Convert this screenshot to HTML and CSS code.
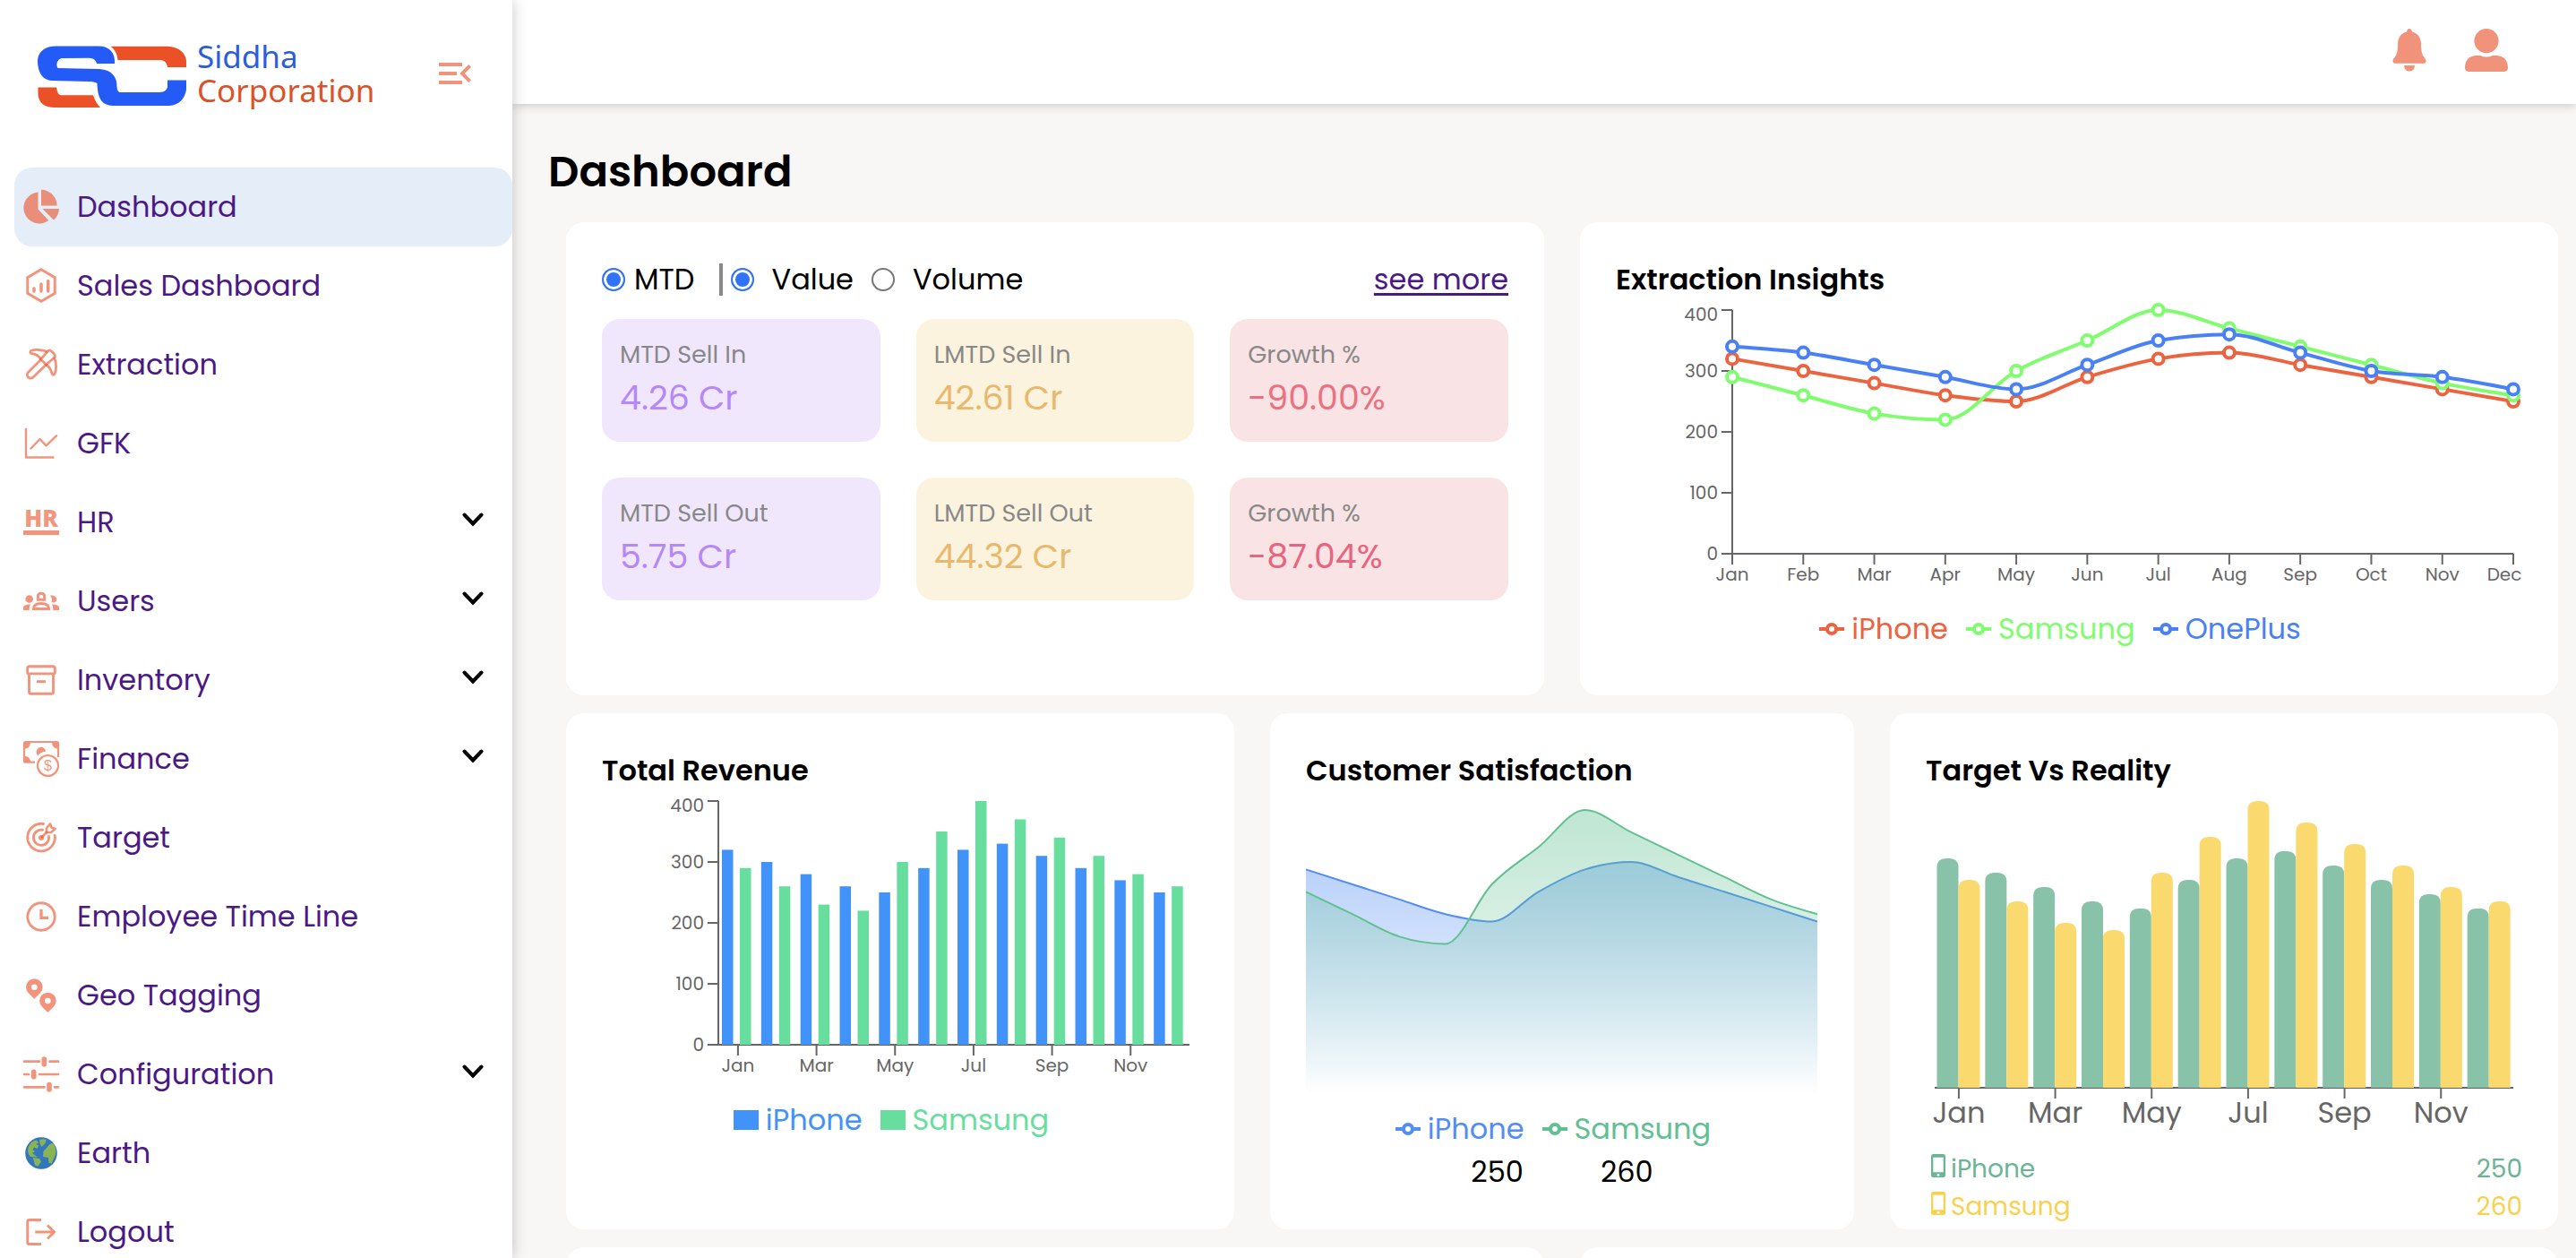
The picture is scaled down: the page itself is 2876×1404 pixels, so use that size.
FILE: index.html
```html
<!DOCTYPE html>
<html lang="en">
<head>
<meta charset="utf-8">
<meta name="viewport" content="width=device-width, initial-scale=1">
<title>Siddha Corporation - Dashboard</title>
<link rel="stylesheet" href="styles.css">
</head>
<body>
<div class="app">
  <aside class="sidebar">
    <div class="brand">
      <svg class="brand-mark" viewBox="0 0 166 70" aria-hidden="true">
        <path fill="#245af6" d="M20 0.5H68C80 0.5 87 8 86 20H66C64.500 15 62 14 58 13.700L27 14C22 15 20 21 22.500 25L69 26C82 27 89 34 88.500 46C89 50 90 52 93 52H136C142 52 145 49 145 45V38.500H166V49C164 60 158 66 147 67H84C72 66 67 60 66.500 42C64 40.500 61 40 57 40L16 39C4 38 0 28 0 16C1 6 9 0.500 20 0.500Z"/>
        <path fill="#eb5026" d="M81.500 0.700H145C158 1 165 8 166 17V24H145C144 18 141 16 136 16H89.500C89 9 86 4 81.500 0.700ZM0.500 46.500H21C22 52 23 55 26 55.300H62C64 61 66 65 70 69H19C8 69 1 64 0.500 54Z"/>
      </svg>
      <span class="brand-name"><span>Siddha</span><span>Corporation</span></span>
      <button class="icon-button" type="button" aria-label="Collapse menu">
        <svg viewBox="0 0 24 24"><path fill="currentColor" d="M3 18h13v-2H3v2zm0-5h10v-2H3v2zm0-7v2h13V6H3zm18 9.590L17.420 12 21 8.410 19.590 7l-5 5 5 5L21 15.590z"/></svg>
      </button>
    </div>
    <nav class="nav">
      <a class="nav-link active" href="#dashboard">
        <svg class="nav-icon" viewBox="0 0 40 40"><path class="solid" d="M16.500 3.500V22.500L28.300 35A17.500 17.500 0 1 1 16.500 3.500ZM20 .8A17.800 17.800 0 0 1 37.600 18.500H20ZM21.500 22H40A18 18 0 0 1 34 34.500Z"/></svg>
        <span>Dashboard</span></a>
      <a class="nav-link" href="#sales">
        <svg class="nav-icon" viewBox="0 0 40 40"><path d="M20 1.800L35.200 10.700V28.300L20 37.200L4.800 28.300V10.700Z" stroke-width="3"/><path d="M12 23V26M20 18V26M27.700 14.500V26" stroke-width="3.500" stroke-linecap="round"/></svg>
        <span>Sales Dashboard</span></a>
      <a class="nav-link" href="#extraction">
        <svg class="nav-icon" viewBox="0 0 40 40"><path d="M20 14L5.500 28.500A3.500 3.500 0 0 0 11 34L26 19.500" stroke-width="2.800"/><path d="M27 5.500Q29 2.500 31.500 5L34.500 8Q36.500 10.500 34 12.500L25.500 20L19.500 14Z" stroke-width="2.800"/><path d="M27 5.500C21 3 12 3 8.500 4.500Q7 6.500 9 7.500C14 8 17 10 20 14M34.500 12C37.500 18 37 26 35 30.500Q33.500 32.500 32 30C31 26 29 22 25.500 20" stroke-width="2.800"/></svg>
        <span>Extraction</span></a>
      <a class="nav-link" href="#gfk">
        <svg class="nav-icon" viewBox="0 0 40 40"><path d="M3 4V35.500H33.500M8.500 25.500L18.500 15L25.500 22.300L37 11.300" stroke-width="2.400" stroke-linecap="round" stroke-linejoin="round"/></svg>
        <span>GFK</span></a>
      <a class="nav-link" href="#hr">
        <svg class="nav-icon" viewBox="0 0 40 40"><text class="solid hr-text" x="20" y="24.500" text-anchor="middle">HR</text><path class="solid" d="M0 29H40V34H0Z"/></svg>
        <span>HR</span><svg class="chevron" viewBox="0 0 24 16"><path d="M2.500 2.500L12 12.500L21.500 2.500"/></svg></a>
      <a class="nav-link" href="#users">
        <svg class="nav-icon" viewBox="0 0 40 40"><path class="solid" d="M2.400 17.500A4.300 4.300 0 1 1 11 17.500A4.300 4.300 0 0 1 2.400 17.500ZM29.500 13.600C33 12.800 37.300 14.500 37.300 17.500C37.300 21 34 22.500 31.500 20.800C32.700 18.500 32 15.500 29.500 13.600ZM0 30V27Q0 23.500 8 23.500Q6.500 26 6.600 30ZM40 30V27Q40 23.500 32 23.500Q33.500 26 33.400 30Z"/><path d="M16.400 14.500Q16.400 11.300 20 11.300Q23.600 11.300 23.600 14.500V18.300H16.400ZM11.400 28.500Q11.400 22.500 20 22.500Q28.600 22.500 28.600 28.500Z" stroke-width="3"/></svg>
        <span>Users</span><svg class="chevron" viewBox="0 0 24 16"><path d="M2.500 2.500L12 12.500L21.500 2.500"/></svg></a>
      <a class="nav-link" href="#inventory">
        <svg class="nav-icon" viewBox="0 0 40 40"><path d="M7 4.700H33Q35.300 4.700 35.300 7V11.500Q35.300 12.900 33.600 12.900H6.400Q4.700 12.900 4.700 11.500V7Q4.700 4.700 7 4.700ZM6.500 13V33Q6.500 35.300 8.500 35.300H31.500Q33.500 35.300 33.500 33V13" stroke-width="2.900"/><path d="M15 21.700H25" stroke-width="3"/></svg>
        <span>Inventory</span><svg class="chevron" viewBox="0 0 24 16"><path d="M2.500 2.500L12 12.500L21.500 2.500"/></svg></a>
      <a class="nav-link" href="#finance">
        <svg class="nav-icon" viewBox="0 0 40 40"><path d="M13 23.700H2.500Q1 23.700 1 22.200V2.500Q1 1 2.500 1H37.500Q39 1 39 2.500V18" stroke-width="2.200"/><path class="solid" d="M2 2H8Q7.500 8 2 8.500ZM38 2H32Q32.500 8 38 8.500ZM2 23V17Q7.500 17.500 8 23ZM15 14A5.200 5.200 0 1 1 25 11.500Q19 12.500 16 16.500Z"/><circle cx="27.500" cy="27.500" r="11.500" stroke-width="2.200"/><text class="solid dollar" x="27.500" y="33" text-anchor="middle">$</text></svg>
        <span>Finance</span><svg class="chevron" viewBox="0 0 24 16"><path d="M2.500 2.500L12 12.500L21.500 2.500"/></svg></a>
      <a class="nav-link" href="#target">
        <svg class="nav-icon" viewBox="0 0 40 40"><path d="M22.500 4.500A15.300 15.300 0 1 0 35.200 17.500M21.500 11.300A8.600 8.600 0 1 0 28.500 18.500" stroke-width="2.900" stroke-linecap="round"/><path d="M20 20L27 13" stroke-width="2.900"/><circle class="solid" cx="20" cy="20" r="3"/><path d="M26 14V9L30 4.500L31.500 8.500L35.500 10L31 14Z" stroke-width="2.600" stroke-linejoin="round"/></svg>
        <span>Target</span></a>
      <a class="nav-link" href="#timeline">
        <svg class="nav-icon" viewBox="0 0 40 40"><circle cx="20" cy="20" r="15.200" stroke-width="2.900"/><path d="M20 11.700V21.300H28" stroke-width="3.300"/></svg>
        <span>Employee Time Line</span></a>
      <a class="nav-link" href="#geo">
        <svg class="nav-icon" viewBox="0 0 40 40"><path class="solid" fill-rule="evenodd" d="M12.300 23.700L5.500 17A9.300 9.300 0 1 1 19.100 17ZM12.300 14A3.300 3.300 0 1 0 12.300 7.400A3.300 3.300 0 0 0 12.300 14ZM27.400 39L20.600 32.300A9.300 9.300 0 1 1 34.200 32.300ZM27.400 29.300A3.300 3.300 0 1 0 27.400 22.700A3.300 3.300 0 0 0 27.400 29.300Z"/></svg>
        <span>Geo Tagging</span></a>
      <a class="nav-link" href="#configuration">
        <svg class="nav-icon" viewBox="0 0 40 40"><path d="M1 5.700H18M29.500 5.700H39M1 20H6M18 20H39M1 34.300H23.500M35 34.300H39" stroke-width="2.700" stroke-linecap="round"/><path d="M23.300 3V8.700M11.700 17.200V22.800M29 31.500V37" stroke-width="5.600" stroke-linecap="round"/></svg>
        <span>Configuration</span><svg class="chevron" viewBox="0 0 24 16"><path d="M2.500 2.500L12 12.500L21.500 2.500"/></svg></a>
      <a class="nav-link" href="#earth">
        <svg class="nav-icon" viewBox="0 0 40 40"><circle cx="20" cy="20" r="17.800" fill="#3277bd" stroke="none"/><g fill="#8ab356" stroke="none"><path d="M5.500 14C7 9 11 6 15 5.500L17 8.500L14 10L17.500 11.500L15.500 15L12 13.500L10.500 16L13 18L10 20L13.500 22.500L16 24.500L8.500 24C5.500 22 4.500 18 5.500 14ZM18 5Q22 3.500 25.500 5L24.500 9L20.500 13L18.500 9ZM10.500 25L18 26L20 29.500L16.500 34.500L13 33.500L12 29ZM29.500 10L33 8.500C36 12 37 17 36 22L31.500 31.500L28.500 31L28 25L22 24L22.500 18Z"/></g></svg>
        <span>Earth</span></a>
      <a class="nav-link" href="#logout">
        <svg class="nav-icon" viewBox="0 0 40 40"><path d="M20 6.500H6.500Q4.800 6.500 4.800 8.500V31.500Q4.800 33.500 6.500 33.500H20" stroke-width="3"/><path d="M13.300 20H34M27 12.500L34.500 20L27 27.500" stroke-width="3"/></svg>
        <span>Logout</span></a>
    </nav>
  </aside>

  <div class="page">
    <header class="topbar">
      <button class="icon-button" type="button" aria-label="Notifications">
        <svg viewBox="0 0 48 48"><path fill="currentColor" d="M24 0Q26.500 0 27 3.500C34 5 36.700 11 36.900 16C37 24 37.500 29 42 34Q43.500 37 41 38.700H7Q4.500 37 6 34C10.500 29 11 24 11.100 16C11.300 11 14 5 21 3.500Q21.500 0 24 0ZM18 41H30Q29.500 47.600 24 47.600Q18.500 47.600 18 41Z"/></svg>
      </button>
      <button class="icon-button" type="button" aria-label="Account">
        <svg viewBox="0 0 48 48"><path fill="currentColor" d="M24 0A13.600 13.600 0 1 1 24 27.200A13.600 13.600 0 1 1 24 0ZM12 30H17Q24 33 31 30H36Q47.500 31 48 43Q48.200 48 44 48H4Q-.2 48 0 43Q.5 31 12 30Z"/></svg>
      </button>
    </header>

    <main class="content">
      <h1>Dashboard</h1>
      <div class="row halves">
        <section class="card">
          <form class="filters">
            <label class="period"><input type="radio" name="period" checked>MTD</label>
            <div class="measures">
              <label><input type="radio" name="measure" checked>Value</label>
              <label><input type="radio" name="measure">Volume</label>
            </div>
            <a class="more" href="#sales">see more</a>
          </form>
          <div class="tiles">
            <div class="tile purple"><span>MTD Sell In</span><strong>4.26 Cr</strong></div>
            <div class="tile amber"><span>LMTD Sell In</span><strong>42.61 Cr</strong></div>
            <div class="tile red"><span>Growth %</span><strong>-90.00%</strong></div>
            <div class="tile purple"><span>MTD Sell Out</span><strong>5.75 Cr</strong></div>
            <div class="tile amber"><span>LMTD Sell Out</span><strong>44.32 Cr</strong></div>
            <div class="tile red deep"><span>Growth %</span><strong>-87.04%</strong></div>
          </div>
        </section>
        <section class="card">
          <h2>Extraction Insights</h2>
          <svg class="chart" id="extraction-chart" viewBox="0 0 1012 342" role="img" aria-label="Extraction by brand per month"></svg>
          <ul class="legend">
            <li class="c-orange"><svg class="key" viewBox="0 0 28 28"><path d="M0 14H9M19 14H28"/><circle cx="14" cy="14" r="5"/></svg>iPhone</li>
            <li class="c-lime"><svg class="key" viewBox="0 0 28 28"><path d="M0 14H9M19 14H28"/><circle cx="14" cy="14" r="5"/></svg>Samsung</li>
            <li class="c-blue"><svg class="key" viewBox="0 0 28 28"><path d="M0 14H9M19 14H28"/><circle cx="14" cy="14" r="5"/></svg>OnePlus</li>
          </ul>
        </section>
      </div>

      <div class="row thirds">
        <section class="card">
          <h2>Total Revenue</h2>
          <svg class="chart" id="revenue-chart" viewBox="0 0 666 342" role="img" aria-label="Revenue by brand per month"></svg>
          <ul class="legend">
            <li class="c-sky"><i class="swatch"></i>iPhone</li>
            <li class="c-mint"><i class="swatch"></i>Samsung</li>
          </ul>
        </section>
        <section class="card">
          <h2>Customer Satisfaction</h2>
          <svg class="chart" id="satisfaction-chart" viewBox="0 0 572 352" role="img" aria-label="Customer satisfaction by brand"></svg>
          <ul class="legend">
            <li class="c-cornflower"><svg class="key" viewBox="0 0 28 28"><path d="M0 14H9M19 14H28"/><circle cx="14" cy="14" r="5"/></svg>iPhone</li>
            <li class="c-sea"><svg class="key" viewBox="0 0 28 28"><path d="M0 14H9M19 14H28"/><circle cx="14" cy="14" r="5"/></svg>Samsung</li>
          </ul>
          <div class="totals"><span>250</span><span>260</span></div>
        </section>
        <section class="card">
          <h2>Target Vs Reality</h2>
          <svg class="chart" id="target-chart" viewBox="0 0 666 400" role="img" aria-label="Target against reality per month"></svg>
          <dl class="brands">
            <div class="c-jade"><dt><svg class="phone" viewBox="0 0 16 26"><path fill="currentColor" fill-rule="evenodd" d="M2.500 0H13.500Q16 0 16 2.500V23.500Q16 26 13.500 26H2.500Q0 26 0 23.500V2.500Q0 0 2.500 0ZM2.300 3.800V20.200H13.700V3.800ZM8 21.700A1.500 1.500 0 1 0 8 24.700A1.500 1.500 0 0 0 8 21.700Z"/></svg>iPhone</dt><dd>250</dd></div>
            <div class="c-yellow"><dt><svg class="phone" viewBox="0 0 16 26"><path fill="currentColor" fill-rule="evenodd" d="M2.500 0H13.500Q16 0 16 2.500V23.500Q16 26 13.500 26H2.500Q0 26 0 23.500V2.500Q0 0 2.500 0ZM2.300 3.800V20.200H13.700V3.800ZM8 21.700A1.500 1.500 0 1 0 8 24.700A1.500 1.500 0 0 0 8 21.700Z"/></svg>Samsung</dt><dd>260</dd></div>
          </dl>
        </section>
      </div>

      <div class="row halves">
        <section class="card"></section>
        <section class="card"></section>
      </div>
    </main>
  </div>
</div>
<script src="charts.js"></script>
</body>
</html>
```
FILE: styles.css
```css
* { box-sizing: border-box; }

body {
  margin: 0;
  background: #f8f7f5;
  color: #000;
  font-family: Poppins, Inter, "Liberation Sans", sans-serif;
  font-size: 32px;
  line-height: 48px;
}

h1, h2, ul, dl, dd { margin: 0; padding: 0; }

.app {
  display: grid;
  grid-template-columns: 572px minmax(0, 1fr);
  height: 100vh;
  overflow: hidden;
}

/* Sidebar */
.sidebar {
  z-index: 2;
  height: 100vh;
  overflow-y: auto;
  scrollbar-width: none;
  background: #fff;
  box-shadow: 0 0 16px rgba(0, 0, 0, .22);
}

.brand {
  display: flex;
  align-items: center;
  height: 163px;
  margin-bottom: 24px;
  padding: 0 40px 0 42px;
}

.brand-mark { width: 166px; height: 70px; margin: 8px 12px 0 0; }

.brand-name {
  display: flex;
  flex-direction: column;
  color: #2b5edb;
  font-family: "Noto Sans", sans-serif;
  font-size: 35px;
  line-height: 38px;
}

.brand-name span + span { color: #dc5127; }

.icon-button {
  display: block;
  width: 48px;
  height: 48px;
  padding: 0;
  border: 0;
  background: none;
  color: #f0937a;
}

.icon-button svg { display: block; width: 48px; height: 48px; }
.brand .icon-button { margin-left: auto; }

.nav-link {
  display: flex;
  align-items: center;
  gap: 20px;
  height: 88px;
  margin-left: 16px;
  padding: 0 32px 0 10px;
  border-radius: 20px;
  color: #4b1986;
  text-decoration: none;
}

.nav-link.active { background: #e5edf8; }

.nav-icon {
  width: 40px;
  height: 40px;
  overflow: visible;
  fill: none;
  stroke: rgba(234, 90, 52, .65);
}

.nav-icon .solid { fill: rgba(234, 90, 52, .65); stroke: none; }
.hr-text { font-family: "Open Sans", sans-serif; font-size: 26px; font-weight: 800; }
.dollar { font-family: "Liberation Sans", sans-serif; font-size: 16px; }

.chevron {
  width: 24px;
  height: 16px;
  margin: 0 0 6px auto;
  fill: none;
  stroke: #000;
  stroke-width: 4;
  stroke-linecap: round;
}

/* Top bar */
.page {
  display: flex;
  flex-direction: column;
  height: 100vh;
}

.topbar {
  z-index: 1;
  display: flex;
  flex: none;
  justify-content: flex-end;
  gap: 38px;
  height: 116px;
  padding: 32px 76px 0 0;
  background: #fff;
  box-shadow: 0 2px 10px rgba(0, 0, 0, .18);
}

.content {
  display: flex;
  flex: 1;
  flex-direction: column;
  gap: 20px;
  padding: 40px 20px 20px 40px;
  overflow-y: auto;
  scrollbar-width: none;
}

h1 { font-size: 48px; font-weight: 600; line-height: 72px; }
h2 { font-size: 32px; font-weight: 600; line-height: 48px; }

/* Cards */
.row { display: grid; gap: 40px; margin-left: 20px; }
.halves { grid-template-columns: repeat(2, minmax(0, 1fr)); }
.thirds { grid-template-columns: minmax(0, 373fr) minmax(0, 326fr) minmax(0, 373fr); }

.card {
  min-height: 528px;
  padding: 40px 40px 0;
  border-radius: 20px;
  background: #fff;
}

.thirds .card { min-height: 576px; }

.filters { display: flex; align-items: center; margin-bottom: 20px; }
.filters label { display: flex; align-items: center; gap: 20px; }
.filters .period { gap: 10px; margin-right: 27px; }

.measures {
  display: flex;
  gap: 20px;
  padding-left: 9px;
  border-left: 4px solid #8a8a8a;
  line-height: 36px;
}

.filters input {
  width: 26px;
  height: 26px;
  margin: 0;
  border: 2px solid #767676;
  border-radius: 50%;
  background: #fff;
  appearance: none;
}

.filters input:checked {
  border-color: #3073f6;
  background: #3073f6;
  box-shadow: inset 0 0 0 3px #fff;
}

.more {
  margin-left: auto;
  color: #4b1986;
  text-decoration-thickness: 3px;
  text-underline-offset: 4px;
}

.tiles { display: grid; grid-template-columns: repeat(3, minmax(0, 1fr)); gap: 40px; }

.tile {
  display: flex;
  flex-direction: column;
  height: 137px;
  padding: 20px;
  border-radius: 20px;
}

.tile span { color: #888; font-size: 27px; line-height: 40px; }
.tile strong { font-size: 38px; font-weight: 400; line-height: 56px; }
.purple { background: #f1e7fd; }
.purple strong { color: #b588f8; }
.amber { background: #fcf3df; }
.amber strong { color: #e8b96d; }
.red { background: #f9e3e4; }
.red strong { color: #ea7181; }
.deep strong { color: #e9647e; }

/* Charts */
.chart { display: block; width: 100%; overflow: visible; }
.axis { fill: none; stroke: #666; stroke-width: 2; }
.tick { fill: #666; font-size: 20px; }
.tick.large { font-size: 32px; }

.legend { display: flex; justify-content: center; list-style: none; }
.legend li { display: flex; align-items: center; gap: 8px; margin-right: 20px; }
.key { width: 28px; height: 28px; fill: none; stroke: currentColor; stroke-width: 4; }
.swatch { width: 28px; height: 22px; background: currentColor; }

.totals { display: flex; justify-content: center; gap: 86px; }

.brands { padding-left: 6px; font-size: 28px; line-height: 42px; }
.brands div { display: flex; justify-content: space-between; }
.brands dt { display: flex; align-items: center; gap: 6px; }
.phone { width: 16px; height: 26px; margin-bottom: 8px; }

.c-orange { color: #ec6340; }
.c-lime { color: #80fc6f; }
.c-blue { color: #4a80f5; }
.c-sky { color: #4293f9; }
.c-mint { color: #67de9e; }
.c-cornflower { color: #528df3; }
.c-sea { color: #61c091; }
.c-jade { color: #69b594; }
.c-yellow { color: #f9d150; }
```
FILE: charts.js
```js
const months = ['Jan', 'Feb', 'Mar', 'Apr', 'May', 'Jun', 'Jul', 'Aug', 'Sep', 'Oct', 'Nov', 'Dec'];
const iphone = [320, 300, 280, 260, 250, 290, 320, 330, 310, 290, 270, 250];
const samsung = [290, 260, 230, 220, 300, 350, 400, 370, 340, 310, 280, 260];
const oneplus = [340, 330, 310, 290, 270, 310, 350, 360, 330, 300, 290, 270];
const maxValue = 400;

const scaleY = (box, v) => box.bottom - (v / maxValue) * (box.bottom - box.top);

// Monotone cubic interpolation, so the curve never overshoots its points.
function curve(points) {
  const n = points.length;
  const slope = [];
  for (let i = 0; i < n - 1; i++) {
    slope.push((points[i + 1][1] - points[i][1]) / (points[i + 1][0] - points[i][0]));
  }
  const m = new Array(n);
  for (let i = 1; i < n - 1; i++) {
    const a = slope[i - 1];
    const b = slope[i];
    m[i] = (Math.sign(a) + Math.sign(b)) * Math.min(Math.abs(a), Math.abs(b), Math.abs(a + b) / 4);
  }
  m[0] = (3 * slope[0] - m[1]) / 2;
  m[n - 1] = (3 * slope[n - 2] - m[n - 2]) / 2;
  let d = `M${points[0]}`;
  for (let i = 0; i < n - 1; i++) {
    const [x0, y0] = points[i];
    const [x1, y1] = points[i + 1];
    const h = (x1 - x0) / 3;
    d += `C${x0 + h},${y0 + h * m[i]} ${x1 - h},${y1 - h * m[i + 1]} ${x1},${y1}`;
  }
  return d;
}

function pointsOf(data, box) {
  const step = (box.right - box.left) / (data.length - 1);
  return data.map((v, i) => [box.left + i * step, scaleY(box, v)]);
}

function yAxis(box) {
  let out = `<path class="axis" d="M${box.left} ${box.top}V${box.bottom}"/>`;
  for (let v = 0; v <= maxValue; v += 100) {
    const y = scaleY(box, v);
    const labelY = y + (v === maxValue ? 12 : 7);
    out += `<path class="axis" d="M${box.left - 12} ${y}H${box.left}"/>`;
    out += `<text class="tick" x="${box.left - 16}" y="${labelY}" text-anchor="end">${v}</text>`;
  }
  return out;
}

function xAxis(box, ticks, size, drop) {
  let out = `<path class="axis" d="M${box.left} ${box.bottom}H${box.right}"/>`;
  for (const [x, label, labelX] of ticks) {
    out += `<path class="axis" d="M${x} ${box.bottom}V${box.bottom + 12}"/>`;
    out += `<text class="tick ${size}" x="${labelX ?? x}" y="${box.bottom + drop}" text-anchor="middle">${label}</text>`;
  }
  return out;
}

function bandTicks(box) {
  const band = (box.right - box.left) / 12;
  return months.map((m, i) => [box.left + band * (i + 0.5), m]).filter((t, i) => i % 2 === 0);
}

function lineChart(id, series) {
  const box = { left: 130, right: 1002, top: 10, bottom: 282 };
  const step = (box.right - box.left) / 11;
  const ticks = months.map((m, i) => [box.left + i * step, m, i === 11 ? 992 : box.left + i * step]);
  let out = yAxis(box) + xAxis(box, ticks, '', 30);
  for (const [data, color] of series) {
    const pts = pointsOf(data, box);
    out += `<path d="${curve(pts)}" fill="none" stroke="${color}" stroke-width="4"/>`;
    out += pts.map(([x, y]) => `<circle cx="${x}" cy="${y}" r="6" fill="#fff" stroke="${color}" stroke-width="4"/>`).join('');
  }
  document.getElementById(id).innerHTML = out;
}

function barChart(id) {
  const box = { left: 130, right: 656, top: 10, bottom: 282 };
  const band = (box.right - box.left) / 12;
  let out = yAxis(box) + xAxis(box, bandTicks(box), '', 30);
  [[iphone, '#4293f9', 4], [samsung, '#67de9e', 24]].forEach(([data, color, shift]) => {
    data.forEach((v, i) => {
      const y = scaleY(box, v);
      out += `<rect x="${box.left + i * band + shift}" y="${y}" width="12.500" height="${box.bottom - y}" fill="${color}"/>`;
    });
  });
  document.getElementById(id).innerHTML = out;
}

function areaChart(id) {
  const box = { left: 0, right: 571, top: 20, bottom: 352 };
  let out = '<defs>';
  for (const [name, color] of [['blue', '#528df3'], ['green', '#61c091']]) {
    out += `<linearGradient id="fade-${name}" x1="0" y1="0" x2="0" y2="1">
      <stop offset="5%" stop-color="${color}" stop-opacity=".39"/>
      <stop offset="95%" stop-color="${color}" stop-opacity="0"/></linearGradient>`;
  }
  out += '</defs>';
  for (const [data, color, name] of [[iphone, '#528df3', 'blue'], [samsung, '#61c091', 'green']]) {
    const line = curve(pointsOf(data, box));
    out += `<path d="${line}L${box.right} ${box.bottom}H${box.left}Z" fill="url(#fade-${name})"/>`;
    out += `<path d="${line}" fill="none" stroke="${color}" stroke-width="2"/>`;
  }
  document.getElementById(id).innerHTML = out;
}

function roundedBars(id) {
  const box = { left: 10, right: 656, top: 10, bottom: 330 };
  const band = (box.right - box.left) / 12;
  const w = 24;
  const r = 10;
  let out = xAxis(box, bandTicks(box), 'large', 39);
  [[iphone, '#82c0a5', 2.5], [samsung, '#fad968', 26.5]].forEach(([data, color, shift]) => {
    data.forEach((v, i) => {
      const x = box.left + i * band + shift;
      const y = scaleY(box, v);
      out += `<path fill="${color}" fill-opacity=".96" d="M${x} ${box.bottom}V${y + r}Q${x} ${y} ${x + r} ${y}H${x + w - r}Q${x + w} ${y} ${x + w} ${y + r}V${box.bottom}Z"/>`;
    });
  });
  document.getElementById(id).innerHTML = out;
}

lineChart('extraction-chart', [[iphone, '#ec6340'], [samsung, '#80fc6f'], [oneplus, '#4a80f5']]);
barChart('revenue-chart');
areaChart('satisfaction-chart');
roundedBars('target-chart');
```
